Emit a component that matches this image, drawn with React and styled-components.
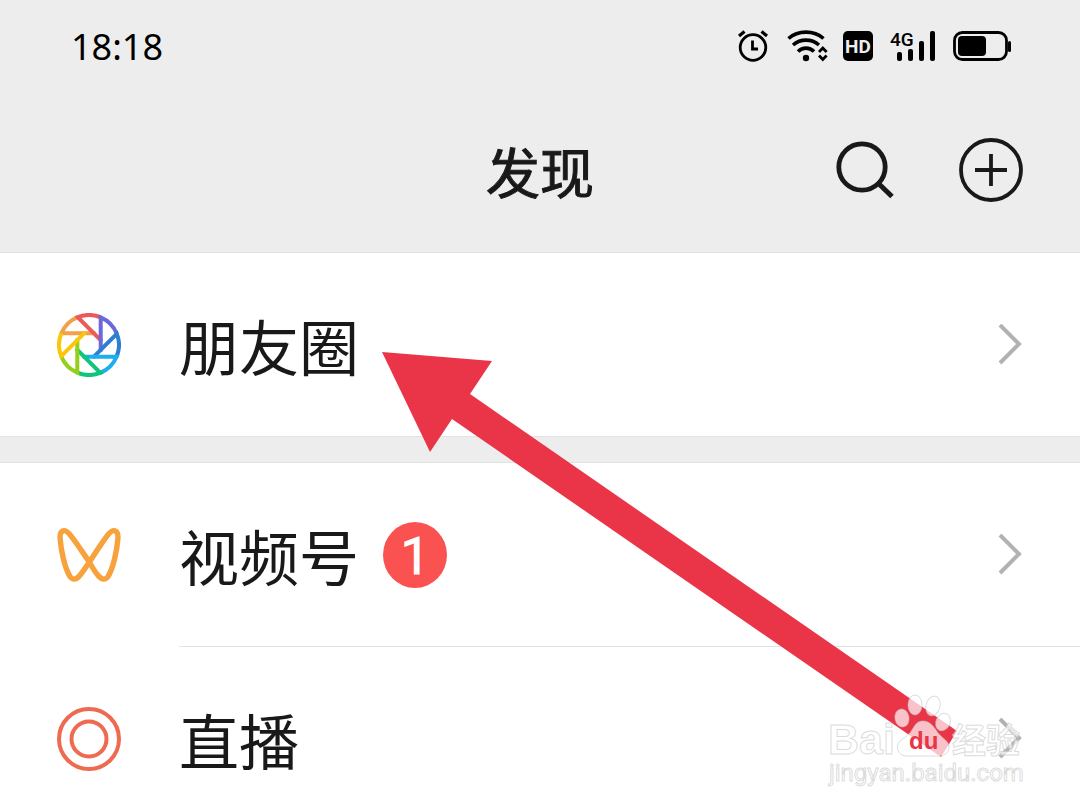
import React from "react";
import styled, { createGlobalStyle } from "styled-components";

const GlobalStyle = createGlobalStyle`
  * { box-sizing: border-box; }
  body {
    margin: 0;
    background: #ffffff;
    color: #191919;
    font-family: "Noto Sans", "Noto Sans CJK SC", sans-serif;
  }
`;

const Screen = styled.div`
  position: relative;
  width: 100%;
  height: 100vh;
  overflow: hidden;
`;

const Header = styled.header`
  background: #ededed;
  border-bottom: 1px solid #dedede;
`;

const StatusBar = styled.div`
  display: flex;
  align-items: center;
  justify-content: space-between;
  height: 92px;
  padding: 0 68px 0 71px;
  color: #000000;
`;

const Clock = styled.time`
  padding-top: 2px;
  font-size: 36px;
  line-height: 48px;
`;

const StatusIcons = styled.div`
  display: flex;
  align-items: center;
  gap: 16px;
`;

const NavBar = styled.div`
  display: grid;
  grid-template-columns: 1fr auto 1fr;
  align-items: center;
  height: 160px;
  padding: 0 57px;
`;

const Title = styled.h1`
  grid-column: 2;
  margin: 0;
  padding-bottom: 2px;
  font-family: "Noto Sans CJK SC", sans-serif;
  font-size: 54px;
  font-weight: 400;
  line-height: 80px;
  -webkit-text-stroke: 1px currentColor;
`;

const Actions = styled.div`
  display: flex;
  align-items: center;
  justify-content: flex-end;
  gap: 65px;
  padding-bottom: 4px;
`;

const IconButton = styled.button`
  display: flex;
  padding: 0;
  border: 0;
  background: none;
  color: inherit;
  cursor: pointer;
`;

const Menu = styled.main`
  display: flex;
  flex-direction: column;
  gap: 27px;
  background: #ededed;
`;

const Group = styled.nav`
  background: #ffffff;
  box-shadow: 0 0 0 1px #e3e3e3;
`;

const Row = styled.a`
  display: flex;
  align-items: stretch;
  gap: 58px;
  padding-left: 57px;
  color: inherit;
  text-decoration: none;
`;

const RowIcon = styled.span`
  display: flex;
  align-items: center;
  width: 64px;
`;

const RowBody = styled.span`
  display: flex;
  flex: 1;
  align-items: center;
  gap: 24px;
  height: ${(p) => (p.$divided ? "184px" : "183px")};
  padding-right: 58px;
  border-bottom: ${(p) => (p.$divided ? "1px solid #e3e3e3" : "0")};
`;

const Label = styled.span`
  font-family: "Noto Sans CJK SC", sans-serif;
  font-size: 60px;
  line-height: 88px;
`;

const Badge = styled.span`
  display: flex;
  align-items: center;
  justify-content: center;
  width: 64px;
  height: 66px;
  padding-top: 4px;
  border-radius: 50%;
  background: #fa5151;
  color: #ffffff;
  font-family: Roboto, sans-serif;
  font-size: 52px;
  line-height: 60px;
  -webkit-text-stroke: 1px currentColor;
`;

const ChevronIcon = styled.svg`
  margin-left: auto;
`;

const ArrowMark = styled.svg`
  position: absolute;
  left: 382px;
  top: 351px;
  pointer-events: none;
`;

const Watermark = styled.svg`
  position: absolute;
  left: 820px;
  top: 690px;
  pointer-events: none;
`;

function Alarm() {
  return (
    <svg width="32" height="36" viewBox="0 0 32 36" fill="none" stroke="#000" aria-label="Alarm">
      <circle cx="15" cy="19.500" r="12.800" strokeWidth="2.800" />
      <path d="M14.500 12.500v8.500h5.500" strokeWidth="2.800" />
      <path d="M1 8 6.500 3.500M29 8 23.500 3.500" strokeWidth="3.200" />
    </svg>
  );
}

function Wifi() {
  return (
    <svg width="40" height="36" viewBox="0 0 40 36" fill="none" stroke="#000" overflow="visible" aria-label="Wi-Fi">
      <path d="M2.500 10.500C12 2 28 2 37.500 10.500" strokeWidth="3.600" />
      <path d="M7 17C14.500 10.500 25.500 10.500 33 17" strokeWidth="3.600" />
      <path d="M12 23.500C16.500 19 23.500 19 28 23.500" strokeWidth="3.600" />
      <circle cx="20" cy="30" r="3.200" fill="#000" stroke="none" />
      <path d="M33 24 36.800 20 40.600 24M33 27.500 36.800 31.500 40.600 27.500" strokeWidth="2.800" />
    </svg>
  );
}

function Hd() {
  return (
    <svg width="32" height="36" viewBox="0 0 32 36" aria-label="HD">
      <rect x="1" y="3" width="30" height="30" rx="5" fill="#000" />
      <text x="16" y="25" textAnchor="middle" fill="#ededed" fontFamily="Roboto, sans-serif" fontWeight="700" fontSize="19">HD</text>
    </svg>
  );
}

function Signal() {
  return (
    <svg width="46" height="36" viewBox="0 0 46 36" aria-label="4G signal">
      <text x="0" y="18" fill="#000" fontFamily="Roboto, sans-serif" fontWeight="500" fontSize="19">4G</text>
      <rect x="7" y="24" width="5" height="9" rx="2" />
      <rect x="18" y="21" width="5" height="12" rx="2" />
      <rect x="29" y="13" width="5" height="20" rx="2" />
      <rect x="40" y="3" width="5" height="30" rx="2" />
    </svg>
  );
}

function Battery() {
  return (
    <svg width="60" height="36" viewBox="0 0 60 36" aria-label="Battery">
      <rect x="2.500" y="4.500" width="52" height="27" rx="8" fill="none" stroke="#000" strokeWidth="2.800" />
      <rect x="6" y="8" width="28" height="20" rx="4" />
      <rect x="56" y="13" width="3" height="11" rx="1.500" />
    </svg>
  );
}

function Search() {
  return (
    <svg width="58" height="58" viewBox="0 0 58 58" fill="none" stroke="currentColor">
      <circle cx="26" cy="26" r="23.200" strokeWidth="4.800" />
      <path d="M42 42 56 55.500" strokeWidth="5" />
    </svg>
  );
}

function Plus() {
  return (
    <svg width="64" height="64" viewBox="0 0 64 64" fill="none" stroke="currentColor" strokeWidth="3.800">
      <circle cx="32" cy="32" r="30" />
      <path d="M32 16v32M16 32h32" />
    </svg>
  );
}

const bladeColors = ["#f2a04a", "#ec5a58", "#6a69dc", "#2d7dd2", "#1daef0", "#10c479", "#93d01a", "#fbc60c"];

function Moments() {
  return (
    <svg width="64" height="64" viewBox="-32 -32 64 64" fill="none" strokeWidth="4">
      {bladeColors.map((color, i) => (
        <path key={color} d="M6.500-11.700H-27.600A30 30 0 0 1-11.200-27.800" stroke={color} transform={`rotate(${i * 45})`} />
      ))}
    </svg>
  );
}

function Channels() {
  return (
    <svg width="64" height="56" viewBox="0 0 64 56" fill="none" stroke="#f7a23c" strokeWidth="5.400">
      <path d="M32 34.500C25 24.500 18 13.500 12 6.500C8 2 3 2.500 3 10.500C4 24.500 8 41.500 13 49.500C16 53.500 19 52.500 22 49.500C32 37.500 42 18.500 52 6.500C56 2 61 2.500 61 10.500C60 24.500 56 41.500 51 49.500C48 53.500 45 52.500 42 49.500C38 45.500 35 39.500 32 34.500Z" />
    </svg>
  );
}

function Live() {
  return (
    <svg width="64" height="64" viewBox="0 0 64 64" fill="none" stroke="#ee6a50" strokeWidth="4">
      <circle cx="32" cy="32" r="30" />
      <circle cx="32" cy="32" r="17.500" />
    </svg>
  );
}

function Chevron() {
  return (
    <ChevronIcon width="24" height="42" viewBox="0 0 24 42" fill="none" stroke="#b2b2b2" strokeWidth="4" aria-hidden="true">
      <path d="M2 1 21 20 2 39" />
    </ChevronIcon>
  );
}

function MenuRow({ icon, label, badge, divided }) {
  return (
    <Row href="#">
      <RowIcon>{icon}</RowIcon>
      <RowBody $divided={divided}>
        <Label>{label}</Label>
        {badge && <Badge>{badge}</Badge>}
        <Chevron />
      </RowBody>
    </Row>
  );
}

export default function App() {
  return (
    <Screen>
      <GlobalStyle />
      <Header>
        <StatusBar>
          <Clock>18:18</Clock>
          <StatusIcons>
            <Alarm />
            <Wifi />
            <Hd />
            <Signal />
            <Battery />
          </StatusIcons>
        </StatusBar>
        <NavBar>
          <Title>发现</Title>
          <Actions>
            <IconButton aria-label="搜索"><Search /></IconButton>
            <IconButton aria-label="添加"><Plus /></IconButton>
          </Actions>
        </NavBar>
      </Header>
      <Menu>
        <Group>
          <MenuRow icon={<Moments />} label="朋友圈" />
        </Group>
        <Group>
          <MenuRow icon={<Channels />} label="视频号" badge="1" divided />
          <MenuRow icon={<Live />} label="直播" divided />
        </Group>
      </Menu>
      <ArrowMark width="576" height="406" viewBox="0 0 576 406" aria-hidden="true">
        <path d="M0 1 110 10 88 43 575 380 559 406 70 68 48 101Z" fill="#ea3548" />
      </ArrowMark>
      <Watermark width="220" height="110" viewBox="0 0 220 110">
        <g fill="#ffffff" fillOpacity="0.700" stroke="#c4c4c4" strokeOpacity="0.600" strokeWidth="1">
          <ellipse cx="82" cy="28" rx="7" ry="9" transform="rotate(-10 82 28)" />
          <ellipse cx="95" cy="15" rx="7" ry="10" />
          <ellipse cx="113" cy="16" rx="7" ry="10" transform="rotate(15 113 16)" />
          <ellipse cx="123" cy="32" rx="7" ry="9" transform="rotate(25 123 32)" />
          <path d="M103 31C110 31 114 37 118 43C123 49 129 51 129 57C129 64 122 67 116 66H87C80 66 76 60 78 54C80 49 88 47 92 40C95 35 97 31 103 31Z" />
          <text x="8" y="64" fontFamily="Liberation Sans, sans-serif" fontWeight="700" fontSize="43">Bai</text>
          <text x="132" y="63" fontFamily="Noto Sans CJK SC, sans-serif" fontWeight="700" fontSize="34">经验</text>
          <text x="9" y="91" fontFamily="Roboto, sans-serif" fontSize="24">jingyan.baidu.com</text>
        </g>
        <text x="89" y="59" fill="#ea3548" fontFamily="Liberation Sans, sans-serif" fontWeight="700" fontSize="24">du</text>
      </Watermark>
    </Screen>
  );
}
